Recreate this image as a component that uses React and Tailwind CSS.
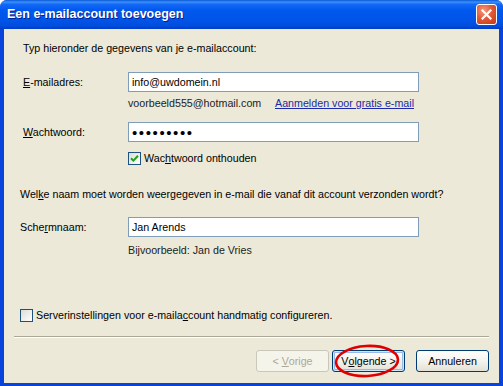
import React from 'react';

const font = { fontFamily: '"Liberation Sans", Arial, sans-serif' };

const Key = ({ children }) => <span className="underline underline-offset-[1px]">{children}</span>;

const XpInput = ({ value, className = '' }) => (
  <div className={`w-[291px] h-[20px] bg-white border border-[#7F9DB9] flex items-center pl-[3px] text-[10.7px] text-black ${className}`}>
    {value}
  </div>
);

const XpCheckbox = ({ checked }) => (
  <div className="w-[13px] h-[13px] border border-[#1C5180] bg-gradient-to-br from-[#DCDCD7] to-white flex items-center justify-center shrink-0">
    {checked && (
      <svg width="9" height="9" viewBox="0 0 9 9">
        <path d="M1 4.2 L3.4 6.6 L8 1.8" fill="none" stroke="#21A121" strokeWidth="2" />
      </svg>
    )}
  </div>
);

const XpButton = ({ children, disabled, isDefault }) => (
  <div
    className={`w-[73px] h-[22px] rounded-[3px] border flex items-center justify-center text-[10.7px] ${
      disabled
        ? 'border-[#C9C7BA] bg-[#F5F4EA] text-[#ACA899]'
        : 'border-[#003C74] bg-gradient-to-b from-white via-[#F4F3EE] to-[#E3E1D6] text-black'
    } ${isDefault ? 'shadow-[inset_0_0_0_1px_#CEE7FF,inset_0_0_0_2px_#98B8EA]' : ''}`}
  >
    {children}
  </div>
);

export default function App() {
  return (
    <div className="w-[503px] h-[386px] bg-white" style={font}>
      <div className="w-[503px] h-[386px] flex flex-col bg-[#0843DB] rounded-t-[7px] overflow-hidden">
        {/* title bar */}
        <div className="h-[29px] shrink-0 flex items-center justify-between pl-[7px] pr-[6px] bg-[linear-gradient(to_bottom,#0A5AD6_0%,#3B8FFA_7%,#1369F5_15%,#0058EE_35%,#0054E8_70%,#004EDF_88%,#003DC4_100%)]">
          <span className="text-white font-bold text-[12.5px] [text-shadow:1px_1px_0_#0A1E8C]">
            Een e-mailaccount toevoegen
          </span>
          <div className="w-[21px] h-[21px] rounded-[3px] border border-white bg-[radial-gradient(circle_at_35%_30%,#F39A7E_0%,#E25A36_45%,#C2371A_100%)] flex items-center justify-center">
            <svg width="11" height="11" viewBox="0 0 11 11">
              <path d="M1.5 1.5 L9.5 9.5 M9.5 1.5 L1.5 9.5" stroke="white" strokeWidth="2.2" strokeLinecap="square" />
            </svg>
          </div>
        </div>

        {/* body */}
        <div className="flex-1 mx-[4px] mb-[3px] bg-[#ECE9D8] flex flex-col text-[10.7px] leading-[13px] text-black">
          <div className="pl-[19px] pt-[13px]">
            <div>Typ hieronder de gegevens van je e-mailaccount:</div>

            <div className="flex items-center mt-[17px]">
              <div className="w-[105px]"><Key>E</Key>-mailadres:</div>
              <XpInput value="info@uwdomein.nl" />
            </div>

            <div className="flex ml-[105px] mt-[5px] text-[#222]">
              <span className="w-[147px]">voorbeeld555@hotmail.com</span>
              <span className="text-[#1C2AA8] underline">Aanmelden voor gratis e-mail</span>
            </div>

            <div className="flex items-center mt-[12px]">
              <div className="w-[105px]"><Key>W</Key>achtwoord:</div>
              <XpInput value={<span className="text-[15px] tracking-[1.6px] leading-[13px]">•••••••••</span>} />
            </div>

            <div className="flex items-center ml-[105px] mt-[10px] gap-[3px]">
              <XpCheckbox checked />
              <span>Wac<Key>h</Key>twoord onthouden</span>
            </div>
          </div>

          <div className="pl-[16px] mt-[23px]">
            <div>Wel<Key>k</Key>e naam moet worden weergegeven in e-mail die vanaf dit account verzonden wordt?</div>

            <div className="flex items-center mt-[16px]">
              <div className="w-[108px]">Sche<Key>r</Key>mnaam:</div>
              <XpInput value="Jan Arends" />
            </div>

            <div className="ml-[108px] mt-[7px] text-[#222]">Bijvoorbeeld: Jan de Vries</div>
          </div>

          <div className="mt-auto">
            <div className="flex items-center pl-[16px] gap-[3px]">
              <XpCheckbox />
              <span>Serverinstellingen voor e-maila<Key>c</Key>count handmatig configureren.</span>
            </div>

            <div className="mx-[10px] mt-[14px] border-t border-[#ACA899] border-b border-b-white" />

            <div className="flex justify-end items-center pr-[10px] mt-[12px] pb-[11px]">
              <XpButton disabled>&lt;&nbsp;<Key>V</Key>orige</XpButton>
              <div className="relative ml-[3px]">
                <XpButton isDefault>V<Key>o</Key>lgende &gt;</XpButton>
                <svg className="absolute left-[1px] top-[-6px] pointer-events-none" width="68" height="34" viewBox="0 0 68 34">
                  <ellipse cx="34" cy="17" rx="31" ry="15" fill="none" stroke="#E00000" strokeWidth="2.6" transform="rotate(-3 34 17)" />
                </svg>
              </div>
              <div className="ml-[11px]">
                <XpButton>Annuleren</XpButton>
              </div>
            </div>
          </div>
        </div>
      </div>
    </div>
  );
}
